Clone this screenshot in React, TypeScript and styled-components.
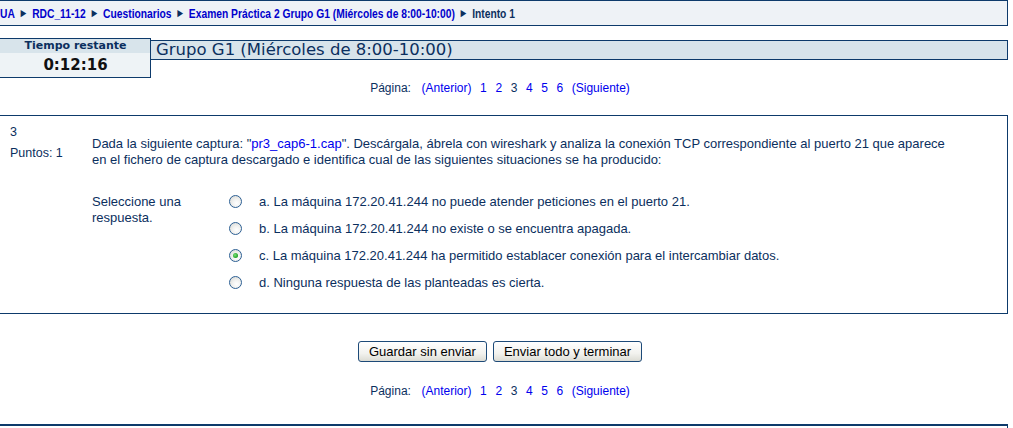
import React from 'react';
import styled, {createGlobalStyle} from 'styled-components';

// ==================== 常量 ====================

const NAVY = '#0b2f5e';
const BORDER = '#0d3a6b';
const LINK = '#0000ee';

const GlobalStyle = createGlobalStyle`
  html, body {
    margin: 0;
    padding: 0;
    background: #ffffff;
    overflow: hidden;
  }
  body {
    font-family: "Liberation Sans", Arial, sans-serif;
    font-size: 12px;
    color: ${NAVY};
  }
`;

// ==================== 样式组件 ====================

// 页面整体向左偏移，模拟横向滚动后的截图
const Page = styled.div`
  margin-left: -8px;
  width: 1016px;
`;

const NavBar = styled.div`
  height: 24px;
  display: flex;
  align-items: center;
  padding-left: 8px;
  background: #eef2f6;
  border-top: 1px solid ${BORDER};
  border-bottom: 1px solid ${BORDER};
  border-right: 1px solid ${BORDER};
  overflow: hidden;
`;

// 原图为窄体字，这里横向压缩
const Crumbs = styled.div`
  font-weight: bold;
  font-size: 13px;
  color: ${NAVY};
  white-space: nowrap;
  display: flex;
  gap: 5px;
  transform: scaleX(0.79);
  transform-origin: left center;
`;

const CrumbLink = styled.a`
  color: #0000cc;
  text-decoration: none;
`;

const Sep = styled.span`
  font-size: 12px;
  color: ${NAVY};
`;

const HeaderRow = styled.div`
  display: flex;
  align-items: flex-start;
  margin-top: 12px;
`;

const TimerBox = styled.div`
  width: 157px;
  border: 1px solid ${BORDER};
  background: #eef3f6;
  font-family: "DejaVu Sans", Verdana, sans-serif;
  text-align: center;
`;

const TimerLabel = styled.div`
  height: 14px;
  line-height: 14px;
  padding-left: 8px;
  background: #d8e4eb;
  font-size: 11px;
  font-weight: bold;
  color: ${NAVY};
`;

const TimerValue = styled.div`
  height: 24px;
  line-height: 24px;
  padding-left: 8px;
  font-size: 15px;
  font-weight: bold;
  color: #111;
`;

const Heading = styled.h2`
  flex: 1;
  margin: 2px 0 0 0;
  height: 18px;
  line-height: 18px;
  padding-left: 5px;
  background: #d8e4eb;
  border: 1px solid ${BORDER};
  border-left: none;
  font-family: "DejaVu Sans", Verdana, sans-serif;
  font-size: 16.5px;
  font-weight: normal;
  color: ${NAVY};
  white-space: nowrap;
  overflow: hidden;
`;

const Paging = styled.div<{ $top: number }>`
  margin-top: ${props => props.$top}px;
  display: flex;
  justify-content: center;
  gap: 8.6px;
  line-height: 14px;
  color: ${NAVY};
`;

const PageLabel = styled.span`
  margin-right: 2px;
`;

const PageLink = styled.a`
  color: ${LINK};
  text-decoration: none;
`;

const QuestionBox = styled.div`
  margin-top: 20px;
  border: 1px solid ${BORDER};
  display: flex;
  padding: 8px 0 16px 0;
  font-size: 13px;
  line-height: 16px;
`;

const InfoCol = styled.div`
  width: 82px;
  padding-left: 17px;
  flex-shrink: 0;
  font-size: 12.5px;
`;

const QNumber = styled.div``;

const Grade = styled.div`
  margin-top: 5px;
`;

const Content = styled.div`
  padding-top: 12px;
`;

const QText = styled.div`
  width: 862px;
`;

const FileLink = styled.a`
  color: ${LINK};
  text-decoration: none;
`;

const Answer = styled.div`
  display: flex;
  margin-top: 26px;
`;

const Prompt = styled.div`
  width: 137px;
  flex-shrink: 0;
`;

const Options = styled.div`
  display: flex;
  flex-direction: column;
  margin-top: -5.5px;
`;

const OptionRow = styled.label`
  display: flex;
  align-items: center;
  height: 27px;
  gap: 17px;
`;

// 自绘单选框
const Radio = styled.span<{ $checked?: boolean }>`
  position: relative;
  top: -1px;
  width: 11px;
  height: 11px;
  border-radius: 50%;
  border: 1px solid #2c5f93;
  background: radial-gradient(circle at 60% 65%, #ffffff 0%, #f2f2f0 40%, #d4d4cf 100%);
  flex-shrink: 0;

  ${props => props.$checked && `
    &::after {
      content: '';
      position: absolute;
      left: 3px;
      top: 3px;
      width: 5px;
      height: 5px;
      border-radius: 50%;
      background: radial-gradient(circle at 40% 40%, #7be07b 0%, #21a121 70%);
    }
  `}
`;

const Buttons = styled.div`
  display: flex;
  justify-content: center;
  gap: 6px;
  margin-top: 27px;
`;

const Button = styled.button`
  height: 21px;
  padding: 0 10px;
  font-family: "Liberation Sans", Arial, sans-serif;
  font-size: 13px;
  color: #000;
  border: 1px solid #1d4a78;
  border-radius: 3px;
  background: linear-gradient(#ffffff, #f2f2ee 60%, #dcdcd4);
  cursor: pointer;
`;

const Footer = styled.div`
  margin-top: 26px;
  height: 10px;
  border-top: 2px solid ${BORDER};
  border-right: 1px solid ${BORDER};
`;

// ==================== 数据 ====================

const crumbs = ['UA', 'RDC_11-12', 'Cuestionarios', 'Examen Práctica 2 Grupo G1 (Miércoles de 8:00-10:00)'];

const options = [
    'a. La máquina 172.20.41.244 no puede atender peticiones en el puerto 21.',
    'b. La máquina 172.20.41.244 no existe o se encuentra apagada.',
    'c. La máquina 172.20.41.244 ha permitido establacer conexión para el intercambiar datos.',
    'd. Ninguna respuesta de las planteadas es cierta.',
];

const CURRENT_PAGE = 3;

// ==================== 子组件 ====================

const Pagination: React.FC<{ top: number }> = ({top}) => (
    <Paging $top={top}>
        <PageLabel>Página:</PageLabel>
        <PageLink href="#">(Anterior)</PageLink>
        {[1, 2, 3, 4, 5, 6].map(n => n === CURRENT_PAGE
            ? <span key={n}>{n}</span>
            : <PageLink key={n} href="#">{n}</PageLink>)}
        <PageLink href="#">(Siguiente)</PageLink>
    </Paging>
);

// ==================== 主组件 ====================

const App: React.FC = () => {
    return (
        <Page>
            <GlobalStyle/>
            <NavBar>
                <Crumbs>
                    {crumbs.map(c => (
                        <React.Fragment key={c}>
                            <CrumbLink href="#">{c}</CrumbLink>
                            <Sep>►</Sep>
                        </React.Fragment>
                    ))}
                    <span>Intento 1</span>
                </Crumbs>
            </NavBar>

            <HeaderRow>
                <TimerBox>
                    <TimerLabel>Tiempo restante</TimerLabel>
                    <TimerValue>0:12:16</TimerValue>
                </TimerBox>
                <Heading>Grupo G1 (Miércoles de 8:00-10:00)</Heading>
            </HeaderRow>

            <Pagination top={3}/>

            <QuestionBox>
                <InfoCol>
                    <QNumber>3</QNumber>
                    <Grade>Puntos: 1</Grade>
                </InfoCol>
                <Content>
                    <QText>
                        Dada la siguiente captura: "<FileLink href="#">pr3_cap6-1.cap</FileLink>". Descárgala,
                        ábrela con wireshark y analiza la conexión TCP correspondiente al puerto 21 que aparece en
                        el fichero de captura descargado e identifica cual de las siguientes situaciones se ha
                        producido:
                    </QText>
                    <Answer>
                        <Prompt>Seleccione una<br/>respuesta.</Prompt>
                        <Options>
                            {options.map((o, i) => (
                                <OptionRow key={i}>
                                    <Radio $checked={i === 2}/>
                                    <span>{o}</span>
                                </OptionRow>
                            ))}
                        </Options>
                    </Answer>
                </Content>
            </QuestionBox>

            <Buttons>
                <Button>Guardar sin enviar</Button>
                <Button>Enviar todo y terminar</Button>
            </Buttons>

            <Pagination top={22}/>

            <Footer/>
        </Page>
    );
};

export default App;
